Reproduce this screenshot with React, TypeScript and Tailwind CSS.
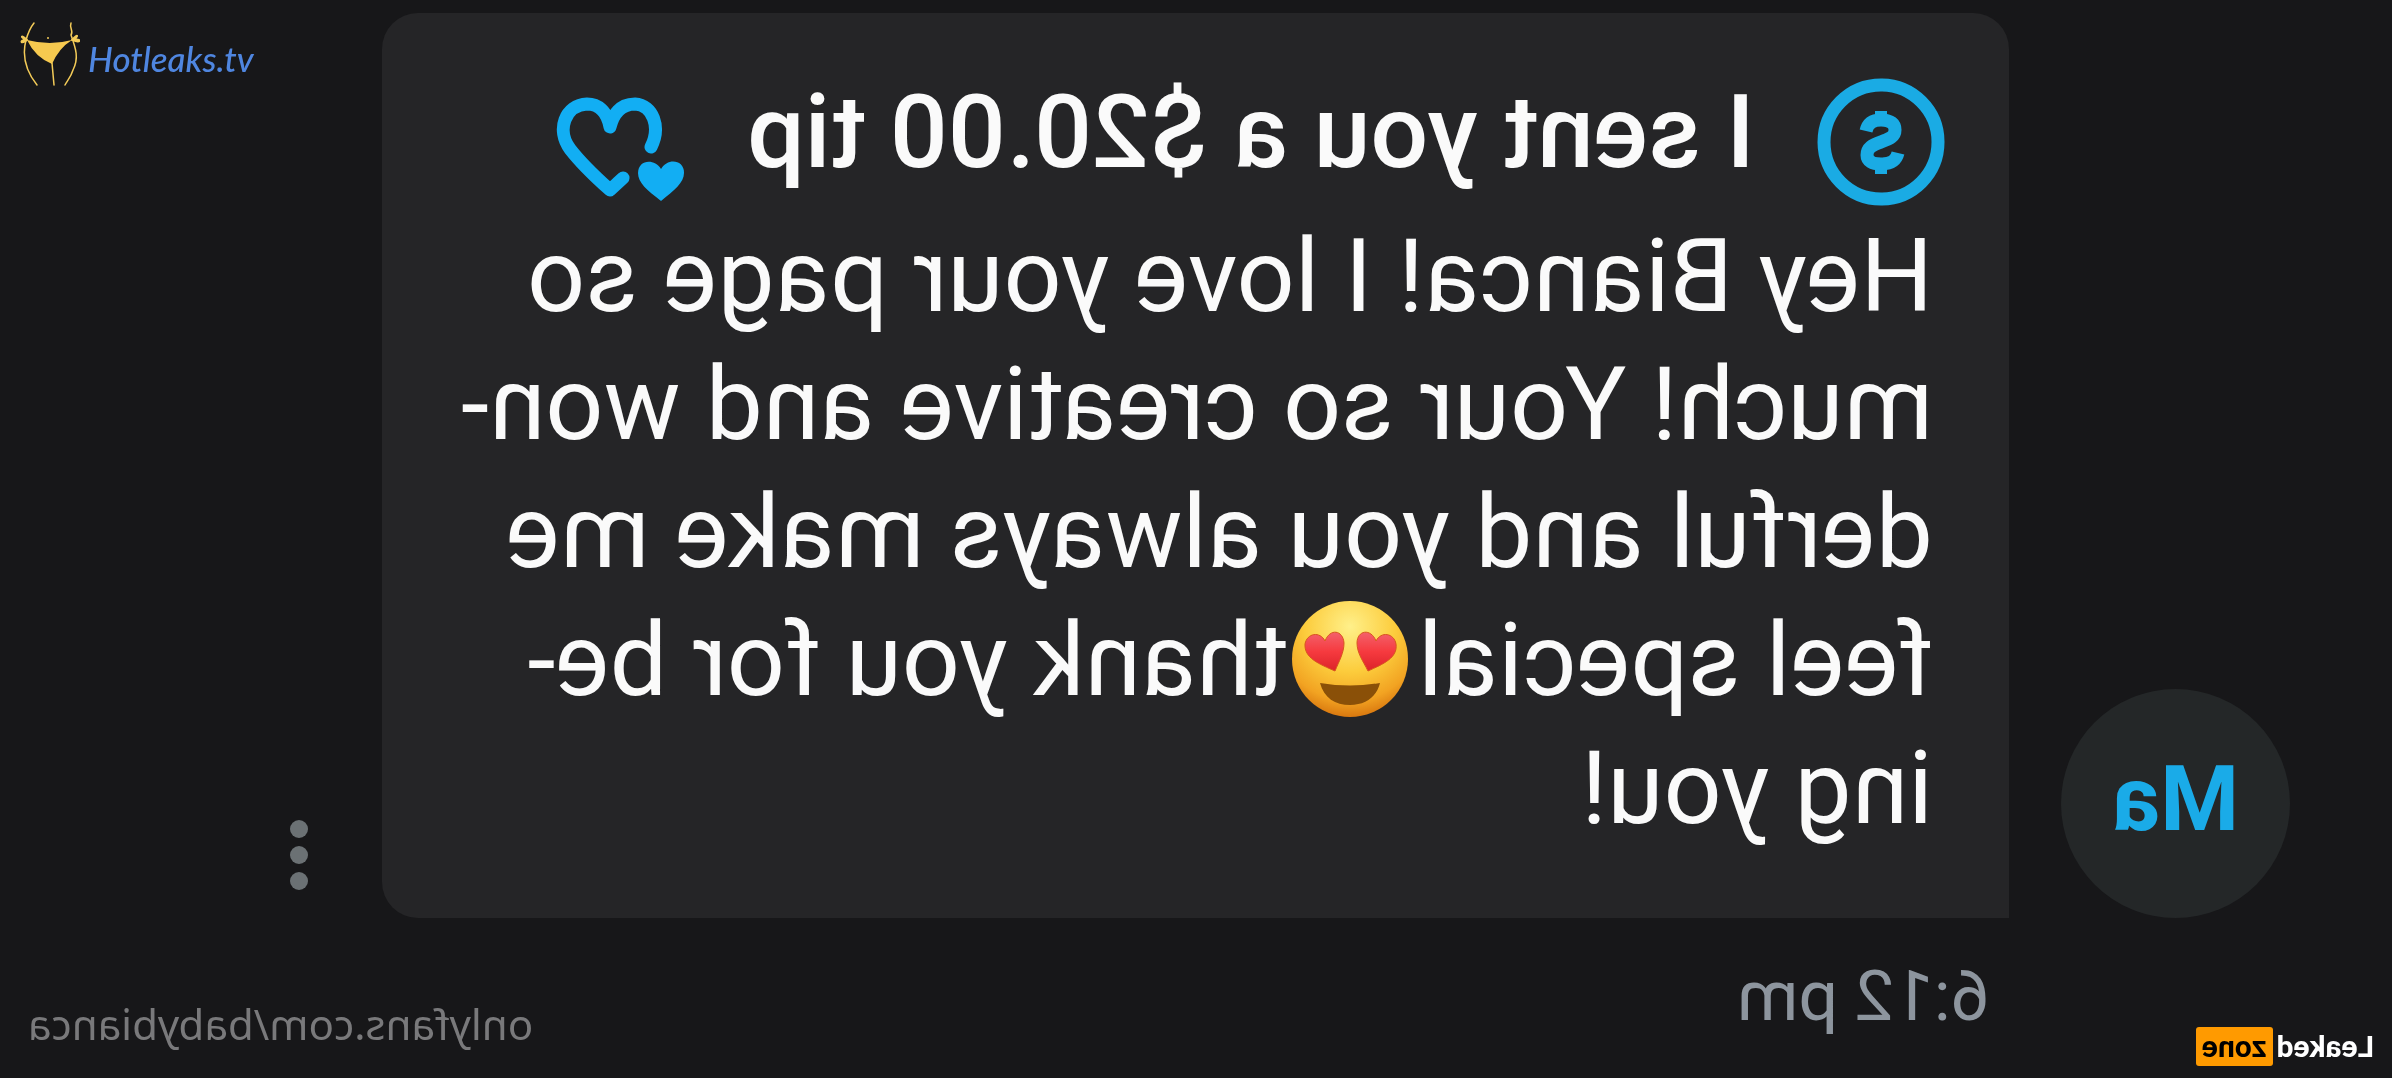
import type { ReactNode } from 'react';

const MESSAGE_LINES = [
  'Hey Bianca! I love your page so',
  'much! Your so creative and won-',
  'derful and you always make me',
];

function TipIcon() {
  return (
    <svg viewBox="0 0 128 128" className="h-32 w-32 shrink-0" aria-hidden="true">
      <circle cx="64" cy="64" r="57" fill="none" stroke="#1aabe4" strokeWidth="13" />
      <path
        d="M79 53C77 44 71 42 64 42C54 42 50 46 50 52C50 59 56 61 64 64C73 67 78 70 78 77C78 83 73 86 64 86C54 86 49 83 47 75"
        fill="none"
        stroke="#1aabe4"
        strokeWidth="13"
      />
      <path d="M64 33V43M64 85V96" stroke="#1aabe4" strokeWidth="12" />
    </svg>
  );
}

function HeartsIcon() {
  return (
    <svg viewBox="0 0 130 106" className="h-[106px] w-[130px] shrink-0" aria-hidden="true">
      <path
        d="M62 81L75 93C93 77 105 65 115 52C129 33 120 8 98 7C87 7 78 14 75 30C71 14 62 7 50 7C32 8 24 30 34 50"
        fill="none"
        stroke="#12aef3"
        strokeWidth="13"
        strokeLinecap="round"
        strokeLinejoin="round"
      />
      <path
        d="M24 104C11 93 1 86 1 76C1 62 18 61 24 72C31 61 47 63 47 76C47 86 38 93 24 104Z"
        fill="#12aef3"
      />
    </svg>
  );
}

function HeartEyes() {
  return (
    <svg
      viewBox="0 0 120 120"
      role="img"
      aria-label="smiling face with heart eyes"
      className="mr-1 ml-2 inline-block h-[120px] w-[120px] align-[-24px]"
    >
      <defs>
        <radialGradient id="face" cx="50%" cy="22%" r="78%">
          <stop offset="0" stopColor="#fff08a" />
          <stop offset="0.5" stopColor="#fccc3c" />
          <stop offset="0.82" stopColor="#f2a322" />
          <stop offset="1" stopColor="#d9780f" />
        </radialGradient>
        <linearGradient id="eye" x1="0" y1="0" x2="0" y2="1">
          <stop offset="0" stopColor="#f3616b" />
          <stop offset="0.5" stopColor="#f63a3f" />
          <stop offset="1" stopColor="#dc2329" />
        </linearGradient>
      </defs>
      <circle cx="60" cy="60" r="58" fill="url(#face)" />
      <path
        d="M42 72C27 65 12 59 14 45C16 34 29 32 34 42C39 29 53 31 53 44C53 54 47 62 42 72Z"
        fill="url(#eye)"
        stroke="#d9541f"
        strokeWidth="1"
      />
      <path
        d="M75 72C91 65 106 59 105 45C103 34 90 32 85 42C80 29 67 31 66 44C66 54 71 62 75 72Z"
        fill="url(#eye)"
        stroke="#d9541f"
        strokeWidth="1"
      />
      <path d="M30 84Q60 89 90 84C86 99 75 106 60 106C45 106 34 99 30 84Z" fill="#8a5008" />
    </svg>
  );
}

function BrandLogo() {
  return (
    <a href="#" className="absolute top-5 left-5 flex items-center gap-2">
      <svg viewBox="0 0 60 68" className="h-[68px] w-[60px]" aria-hidden="true">
        <g fill="none" stroke="#f3cb58" strokeWidth="1.5" strokeLinecap="round">
          <path d="M14 3C10 8 8 13 6 20C2 35 6 51 17 65" />
          <path d="M51 3C49 8 54 11 51 15C56 29 59 38 53 50C51 57 47 61 45 65" />
          <path d="M32 43L34 65" />
          <path d="M7 20C1 14 0 17 6 20C-1 20 1 25 7 20M52 20C58 13 59 16 53 20C62 18 61 24 53 20" strokeWidth="2" />
        </g>
        <path d="M7 20Q30 26 52 20Q39 28 32 44Q15 37 7 20Z" fill="#f6c94f" />
        <circle cx="28" cy="18" r="1" fill="#f3cb58" />
      </svg>
      <span className="pt-2 font-[Lato,sans-serif] text-[35px] leading-[60px] font-medium text-[#4f86e0] italic">
        Hotleaks.tv
      </span>
    </a>
  );
}

function Bubble({ children }: { children: ReactNode }) {
  return (
    <article className="min-h-[905px] flex-1 rounded-[36px] rounded-bl-none bg-[#252527] pt-[65px] pl-16 text-[#fafafa]">
      {children}
    </article>
  );
}

export default function App() {
  return (
    <div className="relative min-h-screen overflow-hidden bg-[#171719] font-[Roboto,sans-serif]">
      {/* The conversation is shown mirrored, the brand logo is not */}
      <main className="relative min-h-screen -scale-x-100 pt-[13px]">
        <section className="flex items-end pr-[290px] pl-[102px]">
          <div className="mr-[52px] flex h-[229px] w-[229px] shrink-0 items-center justify-center rounded-full bg-[#242728] pb-2 text-[90px] font-bold text-[#1aabe8]">
            Ma
          </div>

          <Bubble>
            <header className="flex h-32 items-center">
              <TipIcon />
              <h1 className="ml-[62px] pb-5 text-[102px] leading-[104px] font-medium whitespace-nowrap">
                I sent you a $20.00 tip
              </h1>
              <span className="ml-[62px] pt-4">
                <HeartsIcon />
              </span>
            </header>
            <p className="pt-[6px] pl-3 text-[102px] leading-32 whitespace-nowrap">
              {MESSAGE_LINES.map((line) => (
                <span key={line} className="block">
                  {line}
                </span>
              ))}
              <span className="block h-32">
                feel special
                <HeartEyes />
                thank you for be-
              </span>
              <span className="block">ing you!</span>
            </p>
          </Bubble>

          <button
            aria-label="Message options"
            className="mb-7 ml-[74px] flex flex-col gap-2 rounded"
          >
            <span className="h-[18px] w-[18px] rounded-full bg-[#6b7174]" />
            <span className="h-[18px] w-[18px] rounded-full bg-[#6b7174]" />
            <span className="h-[18px] w-[18px] rounded-full bg-[#6b7174]" />
          </button>
        </section>

        <footer className="flex items-start justify-between pt-[38px] pr-7 pl-[402px]">
          <time className="text-[70px] leading-[80px] text-[#8d959e]">6:12 pm</time>
          <a href="#" className="pt-[42px] font-['Noto_Sans',sans-serif] text-[42px] leading-[52px] text-[#79797b]">
            onlyfans.com/babybianca
          </a>
        </footer>

        <a
          href="#"
          className="absolute bottom-3 left-[18px] flex items-center gap-1 text-[30px] leading-[39px] font-bold text-white"
        >
          Leaked
          <span className="rounded-[3px] bg-[#ff9a00] px-[6px] text-black">zone</span>
        </a>
      </main>
      <BrandLogo />
    </div>
  );
}
